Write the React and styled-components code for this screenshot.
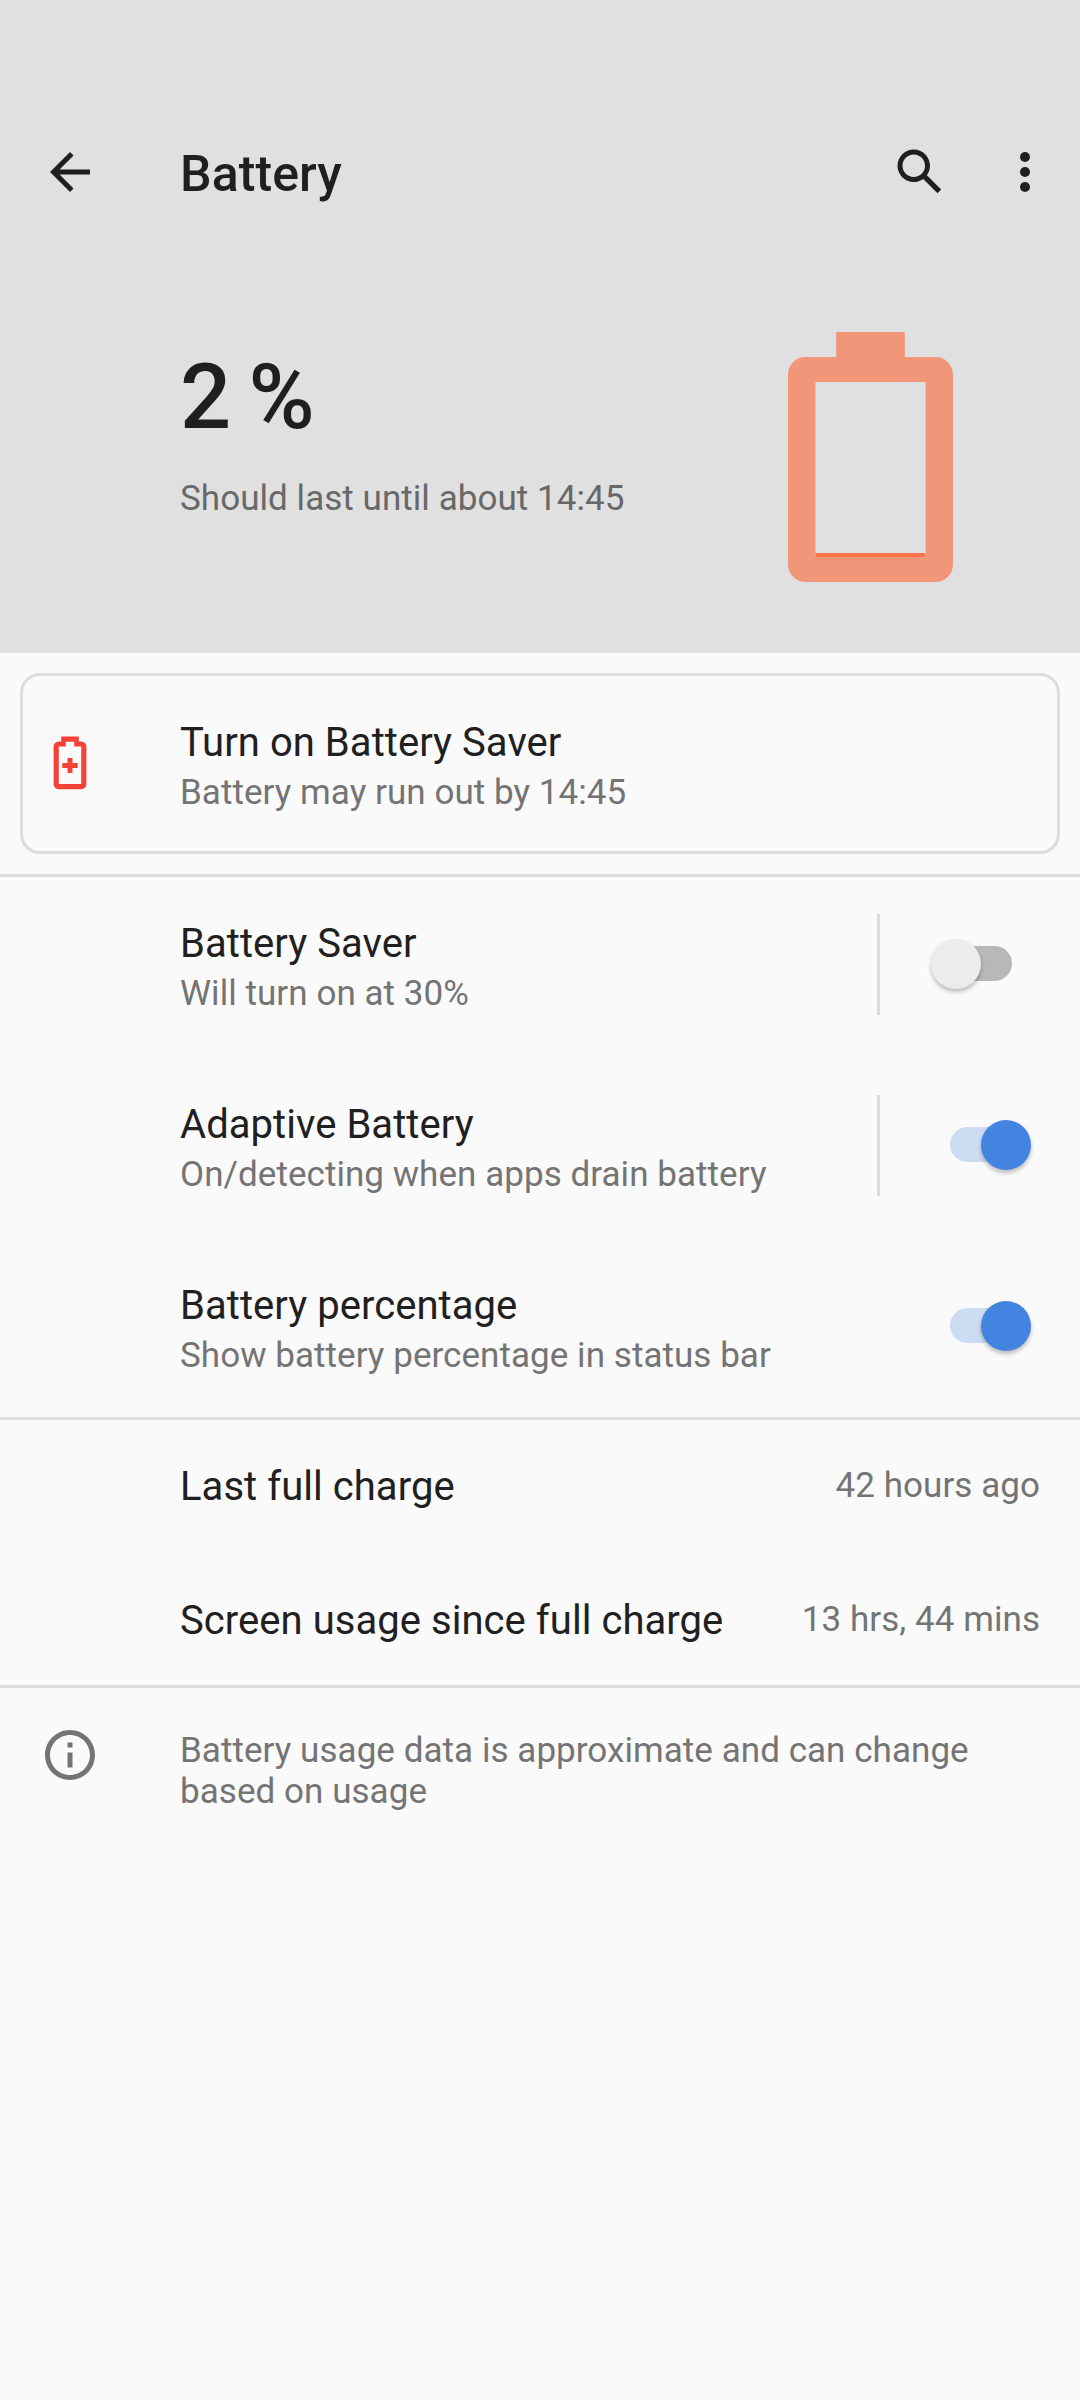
import styled, { createGlobalStyle } from 'styled-components';

const GlobalStyle = createGlobalStyle`
  * {
    box-sizing: border-box;
  }
  body {
    margin: 0;
    background: #fafafa;
    font-family: Roboto, sans-serif;
    color: #1f1f1f;
  }
  svg {
    display: block;
    flex: none;
  }
`;

const BackIcon = () => (
  <svg width='60' height='60' viewBox='0 0 24 24' fill='currentColor'>
    <path d='M20 11H7.83l5.59-5.59L12 4l-8 8 8 8 1.41-1.41L7.83 13H20v-2z' />
  </svg>
);

const SearchIcon = () => (
  <svg width='60' height='60' viewBox='0 0 24 24' fill='currentColor'>
    <path d='M20.49 19l-5.73-5.73C15.53 12.2 16 10.91 16 9.5 16 5.91 13.09 3 9.5 3S3 5.91 3 9.5 5.91 16 9.5 16c1.41 0 2.7-.47 3.77-1.24L19 20.49 20.49 19zM5 9.5C5 7.01 7.01 5 9.5 5S14 7.01 14 9.5 11.99 14 9.5 14 5 11.99 5 9.5z' />
  </svg>
);

const MoreIcon = () => (
  <svg width='60' height='60' viewBox='0 0 24 24' fill='currentColor'>
    <circle cx='12' cy='6' r='2' />
    <circle cx='12' cy='12' r='2' />
    <circle cx='12' cy='18' r='2' />
  </svg>
);

const InfoIcon = () => (
  <svg width='60' height='60' viewBox='0 0 24 24' fill='currentColor'>
    <path d='M11 7h2v2h-2zm0 4h2v6h-2zm1-9C6.48 2 2 6.48 2 12s4.48 10 10 10 10-4.48 10-10S17.52 2 12 2zm0 18c-4.41 0-8-3.59-8-8s3.59-8 8-8 8 3.59 8 8-3.59 8-8 8z' />
  </svg>
);

const BatteryAlertIcon = () => (
  <svg width='60' height='60' viewBox='0 0 60 60' fill='#f44336'>
    <path
      fillRule='evenodd'
      d='M21.200 3.500H38.800V8.500H41.500A5 5 0 0 1 46.400 13.500V51.300A5 5 0 0 1 41.400 56.200H18.600A5 5 0 0 1 13.600 51.300V13.500A5 5 0 0 1 18.500 8.500H21.200zM25.800 8.700V13.500H18.800V51H41.200V13.500H34.200V8.700z'
    />
    <path d='M27.500 25h5v5h5.200v5h-5.200v5h-5v-5h-5.200v-5h5.200z' />
  </svg>
);

const BatteryMeter = () => (
  <svg width='165' height='250' viewBox='0 0 165 250'>
    <path
      fill='#f2967a'
      fillRule='evenodd'
      d='M48.200 0H116.800V25H147.500A17.500 17.500 0 0 1 165 42.500V232.500A17.500 17.500 0 0 1 147.500 250H17.500A17.500 17.500 0 0 1 0 232.500V42.500A17.500 17.500 0 0 1 17.500 25H48.200zM27.500 50V225H137.500V50z'
    />
    <path fill='#fa7448' d='M27.500 221h109.500v4H27.500z' />
  </svg>
);

const Item = ({ title, summary, split, checked }) => (
  <Row>
    <Texts>
      <Title>{title}</Title>
      <Summary>{summary}</Summary>
    </Texts>
    {split && <SplitLine />}
    <SwitchArea>
      <Switch role='switch' aria-checked={checked} aria-label={title} $on={checked}>
        <Thumb $on={checked} />
      </Switch>
    </SwitchArea>
  </Row>
);

export default function App() {
  return (
    <>
      <GlobalStyle />
      <Screen>
        <Header>
          <Toolbar>
            <BackIcon />
            <h1>Battery</h1>
            <SearchIcon />
            <MoreIcon />
          </Toolbar>
          <Level>
            <div>
              <Percent>2 %</Percent>
              <Estimate>Should last until about 14:45</Estimate>
            </div>
            <BatteryMeter />
          </Level>
        </Header>

        <Group>
          <Tip>
            <BatteryAlertIcon />
            <Texts>
              <Title>Turn on Battery Saver</Title>
              <Summary>Battery may run out by 14:45</Summary>
            </Texts>
          </Tip>
        </Group>

        <Group>
          <Item title='Battery Saver' summary='Will turn on at 30%' split checked={false} />
          <Item
            title='Adaptive Battery'
            summary='On/detecting when apps drain battery'
            split
            checked
          />
          <Item title='Battery percentage' summary='Show battery percentage in status bar' checked />
        </Group>

        <Group>
          <Stat>
            <Title>Last full charge</Title>
            <Value>42 hours ago</Value>
          </Stat>
          <Stat>
            <Title>Screen usage since full charge</Title>
            <Value>13 hrs, 44 mins</Value>
          </Stat>
        </Group>

        <Footer>
          <InfoIcon />
          <p>Battery usage data is approximate and can change based on usage</p>
        </Footer>
      </Screen>
    </>
  );
}

const Screen = styled.div`
  width: 1080px;
  height: 2400px;
  background: #fafafa;
  overflow: hidden;
`;

const Header = styled.header`
  height: 653px;
  padding-top: 102px;
  background: #e0e0e0;
`;

const Toolbar = styled.div`
  display: flex;
  align-items: center;
  height: 140px;
  padding: 0 25px 0 40px;

  h1 {
    flex: 1;
    margin: 4px 0 0 80px;
    font-size: 50px;
    font-weight: 500;
    line-height: 60px;
    letter-spacing: 0.1px;
  }

  svg:last-child {
    margin-left: 45px;
  }
`;

const Level = styled.div`
  display: flex;
  align-items: flex-start;
  justify-content: space-between;
  padding: 90px 127.5px 0 180px;
`;

const Percent = styled.div`
  margin-top: 12px;
  font-size: 90px;
  font-weight: 500;
  line-height: 108px;
  word-spacing: -5px;
`;

const Estimate = styled.div`
  margin-top: 23px;
  font-size: 35px;
  line-height: 48px;
  letter-spacing: 0.05px;
  color: #686868;
`;

const Group = styled.section`
  display: flow-root;
  box-shadow: inset 0 -3px 0 #dbdbe0;
`;

const Tip = styled.div`
  display: flex;
  height: 181px;
  margin: 20px 20px 23px;
  padding: 40px 17px 0;
  border: 3px solid #dcdcdc;
  border-radius: 20px;

  svg {
    margin: 17px 80px 0 0;
  }
`;

const Row = styled.div`
  display: flex;
  height: 181px;
  padding: 40px 40px 0 180px;
`;

const Texts = styled.div`
  flex: 1;
`;

const Title = styled.div`
  font-size: 40px;
  line-height: 53px;
  letter-spacing: 0.05px;
  color: #202020;
`;

const Summary = styled.div`
  font-size: 35px;
  line-height: 48px;
  letter-spacing: 0.05px;
  color: #747474;
`;

const SplitLine = styled.div`
  width: 3px;
  height: 101px;
  margin-top: -3px;
  background: #dbdbe0;
`;

const SwitchArea = styled.div`
  display: flex;
  justify-content: flex-end;
  width: 160px;
  padding-top: 29px;
`;

const Switch = styled.div`
  display: flex;
  align-items: center;
  justify-content: ${({ $on }) => ($on ? 'flex-end' : 'flex-start')};
  width: 70px;
  height: 35px;
  margin-right: ${({ $on }) => ($on ? '20px' : '28px')};
  border-radius: 18px;
  background: ${({ $on }) => ($on ? '#cbdcf3' : '#b8b8b8')};
`;

const Thumb = styled.div`
  flex: none;
  width: 50px;
  height: 50px;
  margin: ${({ $on }) => ($on ? '1px -11px 0 0' : '1px 0 0 -11px')};
  border-radius: 50%;
  background: ${({ $on }) => ($on ? '#4384e0' : '#ececec')};
  box-shadow: 0 3px 4px rgba(0, 0, 0, 0.25);
`;

const Stat = styled.div`
  display: flex;
  justify-content: space-between;
  height: 134px;
  padding: 40px 40px 0 180px;
`;

const Value = styled(Summary)`
  margin-top: 2px;
`;

const Footer = styled.footer`
  display: flex;
  padding: 37px 100px 0 40px;
  color: #747474;

  p {
    margin: 5px 0 0 80px;
    font-size: 35px;
    line-height: 41px;
    letter-spacing: 0.05px;
  }
`;
